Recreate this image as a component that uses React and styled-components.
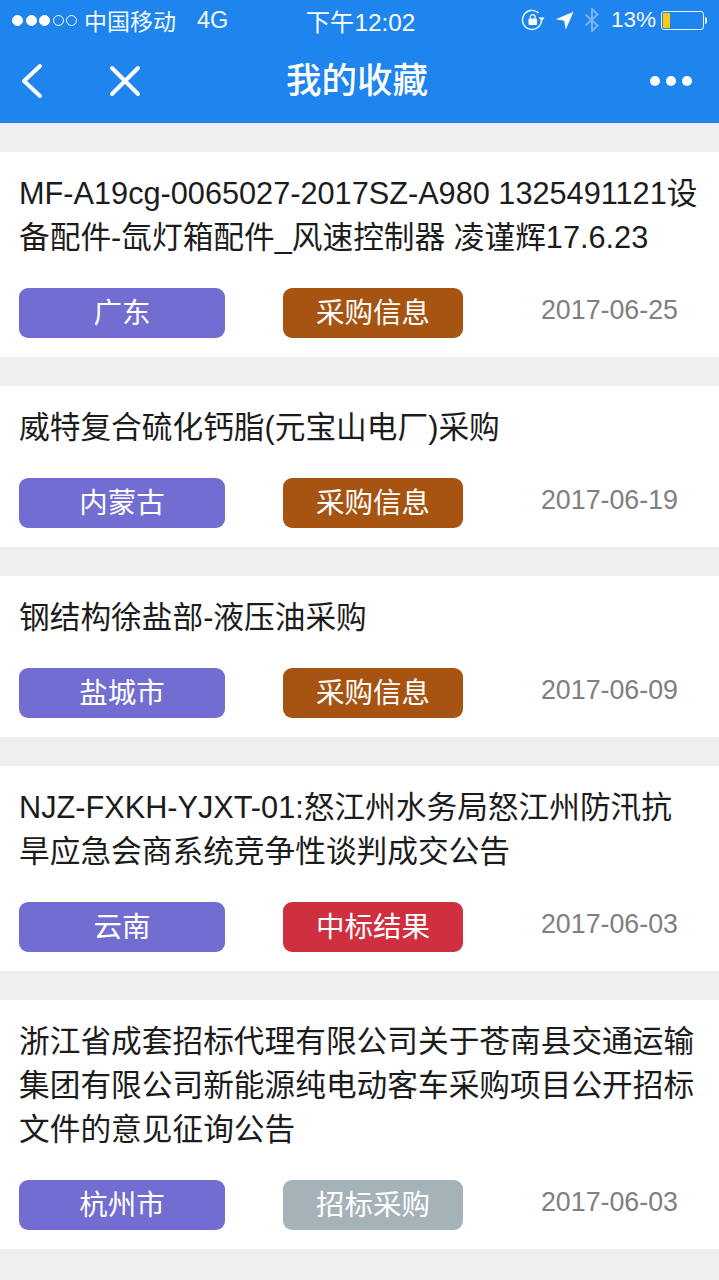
import React from "react";
import styled, { createGlobalStyle } from "styled-components";

const Global = createGlobalStyle`
  html, body { margin: 0; padding: 0; background: #efefef; }
  body { font-family: "Liberation Sans", "Noto Sans CJK SC", sans-serif; }
`;
const Page = styled.div`
  width: 719px; height: 1280px; overflow: hidden; background: #efefef;
`;
const Header = styled.header`
  background: #1e84ee; height: 123px; color: #fff; display: flex; flex-direction: column;
`;
const StatusBar = styled.div`
  height: 40px; display: grid; grid-template-columns: 1fr auto 1fr; align-items: center; padding: 0 15px 0 12px;
  font-size: 23.5px; color: #f2f7fe;
`;
const StatusLeft = styled.div`display: flex; align-items: center;`;
const StatusRight = styled.div`display: flex; align-items: center; justify-content: flex-end;`;
const Time = styled.div`font-size: 24.3px; font-weight: 400; color: #fff; margin-left: 5px;`;
const Dot = styled.span`
  width: 11px; height: 11px; border-radius: 50%; margin-right: 2.6px; box-sizing: border-box;
  background: ${p => (p.$on ? "#fff" : "transparent")};
  border: 1px solid #fff;
`;
const Carrier = styled.span`margin-left: 4px; font-size: 23px;`;
const Net = styled.span`margin-left: 21px; font-size: 23.5px;`;
const Pct = styled.span`font-size: 22.5px; margin: 0 5px 0 11px;`;
const Glyph = styled.svg`display: block; flex: none; margin-left: ${p => p.$ml || 0}px;`;
const Battery = styled.div`
  width: 43px; height: 19px; border: 1px solid #e8f1fd; border-radius: 3px; box-sizing: border-box; padding: 1px;
  display: flex; position: relative;
  &::after { content: ""; position: absolute; right: -4px; top: 5px; width: 2px; height: 7px; background: #e8f1fd; border-radius: 0 2px 2px 0; }
`;
const BatteryFill = styled.div`width: 7px; background: #ffc80a; border-radius: 1px;`;
const NavBar = styled.div`
  flex: 1; display: grid; grid-template-columns: 1fr auto 1fr; align-items: center; padding: 0 27px 2px 20px;
`;
const NavLeft = styled.div`display: flex; align-items: center; gap: 65px;`;
const NavTitle = styled.div`font-size: 35.5px; font-weight: 500; line-height: 40px; margin: 0 0 0 2px;`;
const More = styled.div`display: flex; justify-content: flex-end; gap: 6px;`;
const MoreDot = styled.span`width: 10px; height: 10px; border-radius: 50%; background: #fff;`;
const List = styled.main`display: flex; flex-direction: column; gap: 29px; padding-top: 29px;`;
const Card = styled.article`background: #fff; padding: 20px 19px 19px;`;
const Title = styled.div`
  font-size: 30.7px; line-height: 44px; color: #1c1c1c; height: ${p => p.$lines * 44}px; white-space: nowrap;
`;
const Meta = styled.div`display: flex; align-items: center; margin-top: 28px; height: 50px;`;
const Tag = styled.div`
  height: 50px; border-radius: 9px; color: #fff; font-size: 28.5px; display: flex; align-items: center; justify-content: center;
  padding-bottom: 5px; box-sizing: border-box;
  background: ${p => p.$bg}; width: ${p => p.$w}px; margin-right: ${p => p.$mr}px;
`;
const DateText = styled.div`margin: 0 22px 6px auto; font-size: 26.8px; color: #808080;`;

const items = [
  { lines: ["MF-A19cg-0065027-2017SZ-A980 1325491121设", "备配件-氙灯箱配件_风速控制器 凌谨辉17.6.23"], region: "广东", type: "采购信息", color: "#a75312", date: "2017-06-25" },
  { lines: ["威特复合硫化钙脂(元宝山电厂)采购"], region: "内蒙古", type: "采购信息", color: "#a75312", date: "2017-06-19" },
  { lines: ["钢结构徐盐部-液压油采购"], region: "盐城市", type: "采购信息", color: "#a75312", date: "2017-06-09" },
  { lines: ["NJZ-FXKH-YJXT-01:怒江州水务局怒江州防汛抗", "旱应急会商系统竞争性谈判成交公告"], region: "云南", type: "中标结果", color: "#cf3040", date: "2017-06-03" },
  { lines: ["浙江省成套招标代理有限公司关于苍南县交通运输", "集团有限公司新能源纯电动客车采购项目公开招标", "文件的意见征询公告"], region: "杭州市", type: "招标采购", color: "#a5b3b9", date: "2017-06-03" },
];

export default function App() {
  return (
    <Page>
      <Global />
      <Header>
        <StatusBar>
          <StatusLeft>
            <Dot $on /><Dot $on /><Dot $on /><Dot /><Dot />
            <Carrier>中国移动</Carrier>
            <Net>4G</Net>
          </StatusLeft>
          <Time>下午12:02</Time>
          <StatusRight>
            <Glyph width="24" height="24" viewBox="0 0 24 24" fill="none">
              <path d="M20.5 12a9.500 9.500 0 1 1-3-7" stroke="#fff" strokeWidth="1.4" />
              <path d="M17.5 9.500l3.500 3.500 2.500-3.500z" fill="#fff" />
              <rect x="7.500" y="10.500" width="8.500" height="6.500" rx="1" fill="#fff" />
              <path d="M9.300 10.500V9a2.400 2.400 0 0 1 4.800 0v1.500" stroke="#fff" strokeWidth="1.2" />
            </Glyph>
            <Glyph $ml={10} width="19" height="19" viewBox="0 0 19 19">
              <path d="M18.500.8L10.800 18.500 9.200 9.800.8 8.300z" fill="#fff" />
            </Glyph>
            <Glyph $ml={10} width="16" height="24" viewBox="0 0 16 24" fill="none">
              <path d="M1.500 6.500l12 11L8 23V1l5.500 5.500-12 11" stroke="#7cb2f3" strokeWidth="2" />
            </Glyph>
            <Pct>13%</Pct>
            <Battery><BatteryFill /></Battery>
          </StatusRight>
        </StatusBar>
        <NavBar>
          <NavLeft>
            <Glyph width="24" height="36" viewBox="0 0 24 36" fill="none">
              <path d="M20 3L4 18l16 15" stroke="#fff" strokeWidth="4" strokeLinecap="round" strokeLinejoin="round" />
            </Glyph>
            <Glyph width="32" height="32" viewBox="0 0 32 32" fill="none">
              <path d="M3 3l26 26M29 3L3 29" stroke="#fff" strokeWidth="4" strokeLinecap="round" />
            </Glyph>
          </NavLeft>
          <NavTitle>我的收藏</NavTitle>
          <More><MoreDot /><MoreDot /><MoreDot /></More>
        </NavBar>
      </Header>
      <List>
        {items.map((it) => (
          <Card key={it.lines[0]}>
            <Title $lines={it.lines.length}>
              {it.lines.map((l) => <div key={l}>{l}</div>)}
            </Title>
            <Meta>
              <Tag $bg="#716dd1" $w={206} $mr={58}>{it.region}</Tag>
              <Tag $bg={it.color} $w={180} $mr={0}>{it.type}</Tag>
              <DateText>{it.date}</DateText>
            </Meta>
          </Card>
        ))}
      </List>
    </Page>
  );
}
